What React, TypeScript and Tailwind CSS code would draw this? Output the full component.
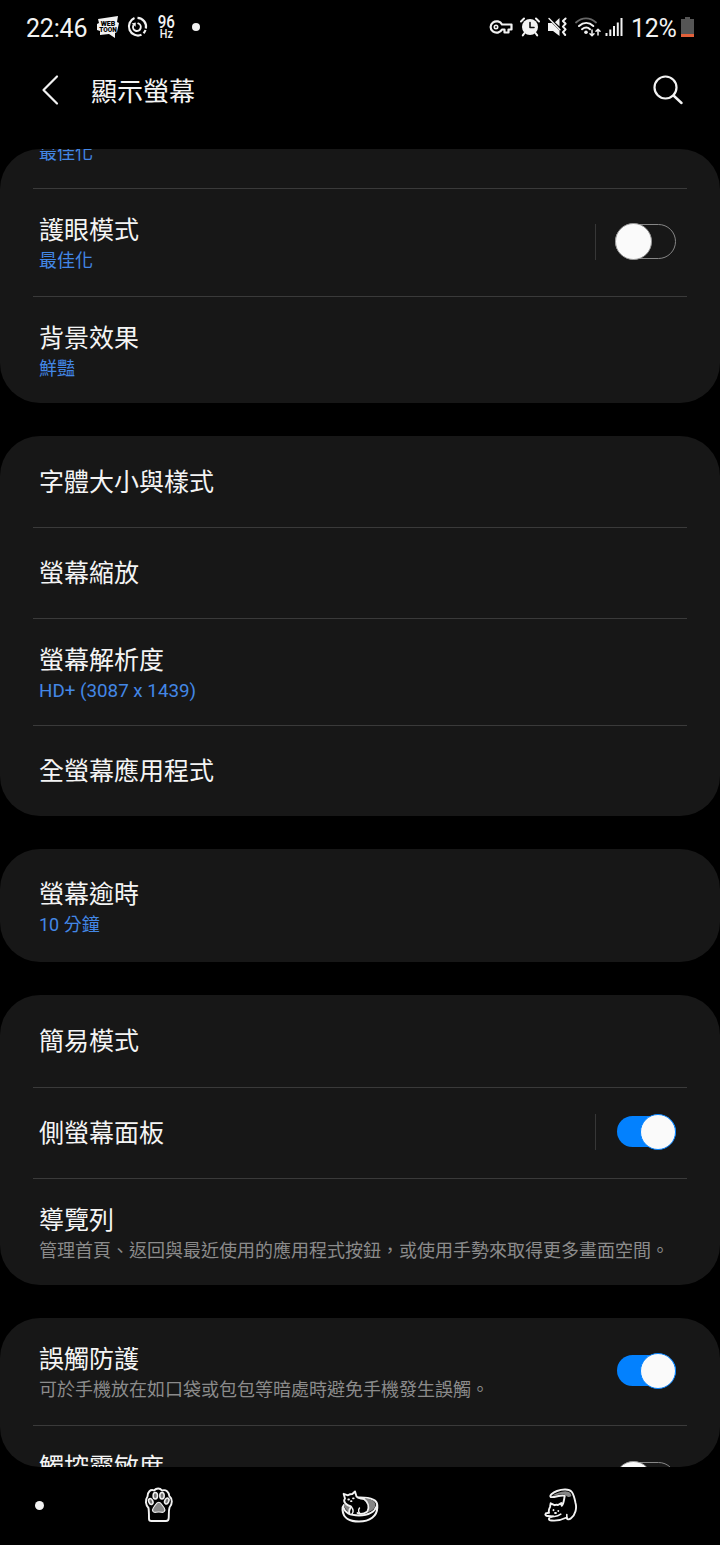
import type { JSX, ReactNode } from "react";

interface Item {
  title: string;
  sub?: string;
  muted?: boolean;
  latin?: boolean;
  toggle?: "on" | "off";
  split?: boolean;
  height: string;
}

const groups: Item[][] = [
  [
    { title: "亮度", sub: "最佳化", height: "h-[108px]" },
    { title: "護眼模式", sub: "最佳化", toggle: "off", split: true, height: "h-[108px]" },
    { title: "背景效果", sub: "鮮豔", height: "h-[106px]" },
  ],
  [
    { title: "字體大小與樣式", height: "h-[92px]" },
    { title: "螢幕縮放", height: "h-[91px]" },
    { title: "螢幕解析度", sub: "HD+ (3087 x 1439)", latin: true, height: "h-[107px]" },
    { title: "全螢幕應用程式", height: "h-[90px]" },
  ],
  [{ title: "螢幕逾時", sub: "10 分鐘", height: "h-[113px] pt-[4px]" }],
  [
    { title: "簡易模式", height: "h-[93px]" },
    { title: "側螢幕面板", toggle: "on", split: true, height: "h-[91px]" },
    {
      title: "導覽列",
      sub: "管理首頁、返回與最近使用的應用程式按鈕，或使用手勢來取得更多畫面空間。",
      muted: true,
      height: "h-[106px]",
    },
  ],
  [
    {
      title: "誤觸防護",
      sub: "可於手機放在如口袋或包包等暗處時避免手機發生誤觸。",
      muted: true,
      toggle: "on",
      height: "h-[108px]",
    },
    { title: "觸控靈敏度", toggle: "off", sub: "提高觸控靈敏度", muted: true, height: "h-[108px]" },
  ],
];

function Toggle({ state }: { state: "on" | "off" }): JSX.Element {
  if (state === "on") {
    return (
      <div className="flex h-[31px] w-[59px] items-center justify-end rounded-full bg-[#0381fe]">
        <div className="h-[36px] w-[36px] shrink-0 rounded-full border border-[#0381fe] bg-[#fafafa]" />
      </div>
    );
  }
  return (
    <div className="flex h-[35px] w-[61px] items-center rounded-full border border-[#868686]">
      <div className="-ml-px h-[37px] w-[37px] shrink-0 rounded-full border border-[#999] bg-[#fafafa]" />
    </div>
  );
}

function Row({ item, last }: { item: Item; last: boolean }): JSX.Element {
  return (
    <div className={`${item.height} px-[33px]`}>
      <div
        className={`flex h-full pl-[6px] pr-[11px] ${
          last ? "" : "border-b border-[#3a3a3a]"
        }`}
      >
        <div className={`flex-1 whitespace-nowrap ${item.sub ? "pt-[27px]" : "self-center pt-[2px]"}`}>
          <p className="text-[25px] leading-[30px] text-[#f4f4f4]">{item.title}</p>
          {item.sub && (
            <p
              className={`leading-[30px] ${item.latin ? "text-[18.8px]" : "text-[18px]"} ${
                item.muted ? "text-[#8b8b8b]" : "text-[#4387e6]"
              }`}
            >
              {item.sub}
            </p>
          )}
        </div>
        {item.toggle && (
          <div className={`flex items-center self-center ${item.sub ? "pb-[2px]" : "pb-[3px]"}`}>
            {item.split && (
              <div
                className={`h-[36px] w-px bg-[#373737] ${
                  item.toggle === "on" ? "mr-[21px]" : "mr-[19px]"
                }`}
              />
            )}
            <Toggle state={item.toggle} />
          </div>
        )}
      </div>
    </div>
  );
}

function Icon({ w, h, className, children }: { w: number; h: number; className?: string; children: ReactNode }): JSX.Element {
  return (
    <svg
      width={w}
      height={h}
      viewBox={`0 0 ${w} ${h}`}
      fill="none"
      stroke="#f2f2f2"
      strokeLinecap="round"
      strokeLinejoin="round"
      className={`shrink-0 ${className ?? ""}`}
    >
      {children}
    </svg>
  );
}

function StatusBar(): JSX.Element {
  return (
    <div className="flex h-[54px] items-center pl-[26px] pr-[26px] text-[#f2f2f2]">
      <span className="w-[70px] pt-[2px] text-[25px] leading-none tracking-[-0.2px]">22:46</span>

      {/* webtoon */}
      <Icon w={24} h={24}>
        <path d="M2 4 22 1 21 7 23 8 21 17 19 18 19 23 13 19 4 20 4 16 1 15 1 9 3 8Z" fill="#f2f2f2" stroke="none" />
        <text x="12" y="11" fontSize="7" fontWeight="900" textAnchor="middle" fill="#000" stroke="none">WEB</text>
        <text x="12" y="17" fontSize="6.5" fontWeight="900" textAnchor="middle" fill="#000" stroke="none">TOON</text>
      </Icon>

      {/* timer ring */}
      <Icon w={22} h={22} className="ml-[6px]">
        <path d="M8.5 2.1A9 9 0 1 0 15.5 18.8" strokeWidth="2.2" strokeLinecap="butt" />
        <path d="M11.5 1.8A9 9 0 0 1 19.9 12.5" strokeWidth="2.2" strokeLinecap="butt" />
        <path d="M19.5 14A9 9 0 0 1 17.5 17.3" strokeWidth="2.2" strokeLinecap="butt" />
        <path d="M7.2 9.8A3.9 3.9 0 1 0 12.2 7.4" strokeWidth="1.9" />
        <path d="M5.6 7.6 9.8 6.4 9.6 10.8Z" fill="#f2f2f2" stroke="none" />
      </Icon>

      <div className="ml-[9px] flex w-[18px] flex-col items-center font-medium">
        <span className="scale-x-[.84] text-[18px] leading-[14px]">96</span>
        <span className="scale-x-90 text-[12px] leading-[11px]">Hz</span>
      </div>
      <div className="ml-[17px] h-[8px] w-[8px] rounded-full bg-[#f2f2f2]" />

      {/* vpn key */}
      <Icon w={24} h={16} className="ml-auto">
        <path d="M13 5.5A6 5.7 0 1 0 13 10.5H15.5V13.5H19.5V10.5H22.5V5.5Z" strokeWidth="2.2" />
        <circle cx="7" cy="8" r="1.7" strokeWidth="1.6" />
      </Icon>

      {/* alarm */}
      <Icon w={20} h={20} className="ml-[7px]">
        <circle cx="10" cy="10" r="8" fill="#f2f2f2" stroke="none" />
        <path d="M1 4.5 4 1.5M16 1.5 19 4.5" strokeWidth="2" />
        <path d="M4.5 16 2.8 18.4M15.5 16 17.2 18.4" strokeWidth="2" />
        <path d="M10 5.5V10.5H14" stroke="#111" strokeWidth="1.6" />
      </Icon>

      {/* vibrate */}
      <Icon w={21} h={20} className="ml-[7px]">
        <path d="M1 6H5L12.5 13.5V19L6 14H1Z" fill="#f2f2f2" stroke="none" />
        <path d="M8 5.3 12.5 1V9.5Z" fill="#f2f2f2" stroke="none" />
        <path d="M2 1.5 13 12.8" strokeWidth="1.4" />
        <path d="M18.6 1.5 15.9 4 18.6 6.8 15.9 9.6 18.6 12.4 15.9 15.2 18.2 18" strokeWidth="2" />
      </Icon>

      {/* wifi with traffic arrows */}
      <Icon w={26} h={21} className="ml-[7px]">
        <path d="M1 5.5C7 0 15 0 21 5.5" stroke="#666" strokeWidth="1.8" />
        <path d="M4 9C8.5 5 14 5 18.3 9M7 12.2C10 9.8 12.5 9.8 15 12.2" strokeWidth="2" />
        <circle cx="11" cy="15.2" r="1.8" fill="#f2f2f2" stroke="none" />
        <path d="M17 13V18.5M15 16.8 17 18.8 19 16.8M23 18V12.5M21 14.2 23 12.2 25 14.2" strokeWidth="1.5" />
      </Icon>

      {/* signal */}
      <Icon w={18} h={20} className="ml-[4px]">
        <path d="M1.5 16V19M5.3 12.5V19M9 9V19M12.8 5.5V19M16.5 1V19" strokeWidth="2" strokeLinecap="butt" />
      </Icon>

      <span className="ml-[8px] w-[47px] pt-[2px] text-[25px] leading-none tracking-[-0.3px]">12%</span>
      <Icon w={13} h={20} className="ml-[3px]">
        <path d="M4 0H9V2H13V17H0V2H4Z" fill="#555" stroke="none" />
        <path d="M0 17H13V20H0Z" fill="#e2603a" stroke="none" />
      </Icon>
    </div>
  );
}

function NavBar(): JSX.Element {
  return (
    <div className="flex h-[78px] items-center pb-px pl-[35px]">
      <div className="h-[9px] w-[9px] rounded-full bg-[#f2f2f2]" />

      {/* paw */}
      <Icon w={30} h={36} className="-mt-px ml-[100px]">
        <path
          d="M5 32C5 28 5 24 4.5 21C1.5 18 1 13 3.5 9.5C3.5 5 6.5 2 10 3.5C12.5.8 16 .8 18 3.5C22 2 25 5 25.3 9C28.8 12 28.5 17 25.5 20.5C24.5 24 25 28 24.7 31C24.7 33 23.5 34 22 34H7.5C6 34 5 33.5 5 32Z"
          strokeWidth="1.9"
        />
        <ellipse cx="11.3" cy="8.7" rx="2.2" ry="3.2" fill="#777" strokeWidth="1.5" />
        <ellipse cx="18" cy="8.7" rx="2.2" ry="3.2" fill="#777" strokeWidth="1.5" />
        <ellipse cx="6.8" cy="14.5" rx="2" ry="3" fill="#777" strokeWidth="1.5" transform="rotate(-25 6.8 14.5)" />
        <ellipse cx="22.8" cy="14" rx="2" ry="3" fill="#777" strokeWidth="1.5" transform="rotate(25 22.8 14)" />
        <path d="M14.8 15.3C17 15.3 18 18 20 20.5C22 23.5 20 25.7 17.5 25.3C15.5 24.8 14 24.8 12 25.3C9 25.8 7.5 23.5 9.5 20.5C11.5 18 12.5 15.3 14.8 15.3Z" fill="#888" strokeWidth="1.1" />
      </Icon>

      {/* cat in a bowl */}
      <Icon w={38} h={34} className="ml-[167px] mt-[3px]">
        <path d="M3 15C1.5 16.5 1.5 18 1.6 20C2 28 9 31.5 18 31.5C29 31.5 36 26 36.2 18V15C36 10 29 7 16 7.5" strokeWidth="2.1" />
        <path d="M2.2 17C4 23.5 10 25.5 18 25.5C27 25.5 33.5 22 35.8 16" strokeWidth="1.9" />
        <path d="M23.5 8.2C29 8.2 34 10.5 34.5 14.5C34.5 18 31.5 20.5 27.5 22C27.8 17.5 27 12 23.5 8.2Z" fill="#858585" stroke="none" />
        <path d="M3 14C5 12.8 8 13.5 9.5 16C8.5 18.5 7.5 20 8 22C5 20 3 17.5 3 14Z" fill="#858585" stroke="none" />
        <path
          d="M8.3 23.5C7.5 21 9 18.5 10 16.5C5 15 1.5 11.5 4 8.5L2.6 3.8L7 5.3C8.2 4.5 9.8 4 11.3 4L14 1.5L15.5 6.5C17 9 20 8 23 9C27 12 28.5 17 26.5 21.5C23.5 23.5 19 24.5 16.5 23"
          fill="#000"
          strokeWidth="1.9"
        />
        <path d="M10.5 17C12 19 12.5 22 11 24M18.5 18C17 20 17.5 22.5 19 23.5" strokeWidth="1.4" />
        <path d="M7.3 9.5H8M12 8.3H12.7M10 11.2H10.5" strokeWidth="1.8" />
      </Icon>

      {/* stretching cat */}
      <Icon w={34} h={34} className="-mt-px ml-[165px]">
        <path
          d="M6.8 9C5 7.5 9 4.5 13 3C18 1.2 25 .6 27.8 4C30 7 30.5 10 31.5 15C33 20 31.5 27 27 30.3C25 32 22.5 31.5 22.8 29.5C18 31.8 12 33 7.5 32.5C4 32.5 4.3 29.5 7 29L9 28.4C6.5 28 5 27.8 3 28C.5 27.5 1 25 3.3 25L5 24.8C4.2 22 5.5 20 6 19L6.7 15.3L10.5 17.2C12 16.5 13 16.7 14 17L17.3 15L17.7 17.8C19.8 16 19.8 12 20.8 7.8C17 6.2 11 9.8 6.8 9Z"
          fill="#000"
          strokeWidth="1.9"
        />
        <path d="M8.2 7.6C12 5.4 18 2.8 22.5 3.4C25.5 3.4 27.2 5.4 27.4 8C25.5 9.6 23.5 9.4 22 7.6C18 4.6 13 7.4 8.2 7.6Z" fill="#858585" stroke="none" />
        <path d="M9.5 22V22.3M14.3 22.8V23M11 25H12" strokeWidth="1.8" />
        <path d="M9 28.4C12 28.8 14.8 27.8 16.8 26.2M22.8 29.5V26.5" strokeWidth="1.6" />
      </Icon>
    </div>
  );
}

export default function App(): JSX.Element {
  return (
    <div
      lang="zh-TW"
      className="flex h-[1545px] w-[720px] flex-col overflow-hidden bg-black font-['Roboto','Noto_Sans_CJK_TC',sans-serif]"
    >
      <StatusBar />

      {/* title bar */}
      <header className="flex h-[95px] items-start pl-[41px] pr-[37px] pt-[20px]">
        <Icon w={20} h={32}>
          <path d="M16 2.5 2.5 16 16 29.5" strokeWidth="2.2" />
        </Icon>
        <h1 className="ml-[30px] mt-px text-[26px] leading-[34px] text-[#f4f4f4]">顯示螢幕</h1>
        <Icon w={30} h={30} className="ml-auto mt-px">
          <circle cx="12.5" cy="12.5" r="11" strokeWidth="2.2" />
          <path d="M20.5 20.5 28.5 28" strokeWidth="2.4" />
        </Icon>
      </header>

      {/* scrolled settings list */}
      <main className="h-[1318px] shrink-0 overflow-hidden rounded-[40px]">
        <div className="-mt-[68px] flex flex-col gap-[33px]">
          {groups.map((group, i) => (
            <section key={i} className="overflow-hidden rounded-[40px] bg-[#171717]">
              {group.map((item, j) => (
                <Row key={item.title} item={item} last={j === group.length - 1} />
              ))}
            </section>
          ))}
        </div>
      </main>

      <NavBar />
    </div>
  );
}
